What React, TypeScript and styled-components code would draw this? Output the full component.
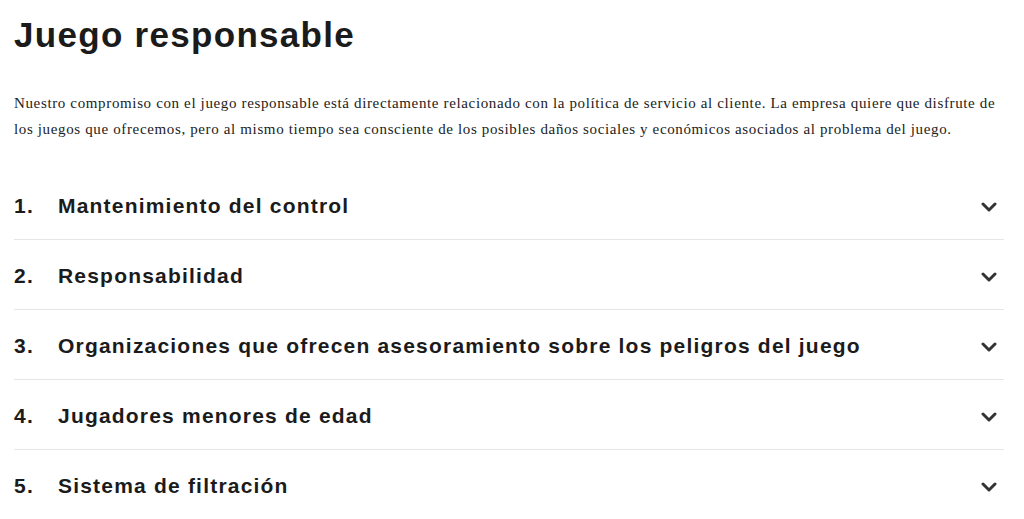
import React from 'react';
import styled, { createGlobalStyle } from 'styled-components';

const GlobalStyle = createGlobalStyle`
  html, body {
    margin: 0;
    padding: 0;
    background: #ffffff;
  }
`;

const Page = styled.main`
  padding: 13px 20px 0 14px;
  color: #1b1b1b;
`;

const Title = styled.h1`
  margin: 0;
  font-family: 'Liberation Sans', Arial, sans-serif;
  font-weight: 700;
  font-size: 35px;
  line-height: 44px;
  letter-spacing: 1.3px;
`;

const Intro = styled.p`
  margin: 33px 0 28px;
  font-family: 'Liberation Serif', 'Times New Roman', serif;
  font-size: 15px;
  line-height: 26px;
  letter-spacing: 0.64px;
  color: #222;
`;

const List = styled.ol`
  list-style: none;
  margin: 0;
  padding: 0;
`;

const Item = styled.li`
  border-bottom: 1px solid #e6e6e6;
`;

const Header = styled.button`
  all: unset;
  box-sizing: border-box;
  width: 100%;
  height: 69px;
  padding-top: 3px;
  display: flex;
  align-items: center;
  cursor: pointer;
  font-family: 'Liberation Sans', Arial, sans-serif;
  font-weight: 700;
  font-size: 21px;
  letter-spacing: 1.2px;
  color: #1b1b1b;
`;

const Num = styled.span`
  width: 44px;
  flex-shrink: 0;
`;

const Label = styled.span`
  flex: 1;
`;

const Chevron = styled.svg`
  width: 16px;
  height: 10px;
  margin-right: 7px;
  margin-top: 1px;
`;

const sections = [
  'Mantenimiento del control',
  'Responsabilidad',
  'Organizaciones que ofrecen asesoramiento sobre los peligros del juego',
  'Jugadores menores de edad',
  'Sistema de filtración',
];

const App: React.FC = () => (
  <>
    <GlobalStyle />
    <Page>
      <Title>Juego responsable</Title>
      <Intro>
        Nuestro compromiso con el juego responsable está directamente relacionado con la política de
        servicio al cliente. La empresa quiere que disfrute de los juegos que ofrecemos, pero al mismo
        tiempo sea consciente de los posibles daños sociales y económicos asociados al problema del juego.
      </Intro>
      <List>
        {sections.map((s, i) => (
          <Item key={s}>
            <Header>
              <Num>{i + 1}.</Num>
              <Label>{s}</Label>
              <Chevron viewBox="0 0 16 10">
                <polyline
                  points="2,2 8,8 14,2"
                  fill="none"
                  stroke="#333"
                  strokeWidth="3"
                  strokeLinecap="round"
                  strokeLinejoin="round"
                />
              </Chevron>
            </Header>
          </Item>
        ))}
      </List>
    </Page>
  </>
);

export default App;
